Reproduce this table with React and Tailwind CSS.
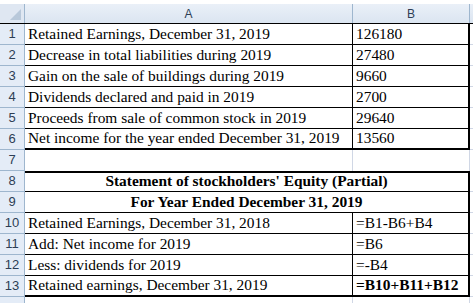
import React from 'react';

const serif = { fontFamily: '"Liberation Serif", "Times New Roman", serif' };

const rows = [
  { n: 1, a: 'Retained Earnings, December 31, 2019', b: '126180' },
  { n: 2, a: 'Decrease in total liabilities during 2019', b: '27480' },
  { n: 3, a: 'Gain on the sale of buildings during 2019', b: '9660' },
  { n: 4, a: 'Dividends declared and paid in 2019', b: '2700' },
  { n: 5, a: 'Proceeds from sale of common stock in 2019', b: '29640' },
  { n: 6, a: 'Net income for the year ended December 31, 2019', b: '13560', last: true },
];

const stmt = [
  { n: 10, a: 'Retained Earnings, December 31, 2018', b: '=B1-B6+B4' },
  { n: 11, a: 'Add: Net income for 2019', b: '=B6' },
  { n: 12, a: 'Less: dividends for 2019', b: '=-B4' },
  { n: 13, a: 'Retained earnings, December 31, 2019', b: '=B10+B11+B12', last: true, bold: true },
];

function RowNum({ n }) {
  return (
    <div className="w-[25px] shrink-0 flex items-center justify-center border-r border-b border-[#9eb6ce] bg-[#e4ecf7] text-[13px] text-[#2d3e55]" style={{ fontFamily: '"Liberation Sans", Arial, sans-serif' }}>
      {n}
    </div>
  );
}

function DataRow({ n, a, b, last, bold }) {
  const bottom = last ? 'border-b-2' : 'border-b';
  return (
    <div className="flex h-[21px]">
      <RowNum n={n} />
      <div className={`w-[328px] shrink-0 flex items-end pl-[3px] pb-[1px] border-r border-black ${bottom} text-[15.4px] leading-[18px] whitespace-nowrap overflow-hidden`} style={serif}>
        {a}
      </div>
      <div className={`w-[117px] shrink-0 flex items-end pl-[3px] pb-[1px] border-r-2 border-black ${bottom} text-[15.4px] leading-[18px] whitespace-nowrap ${bold ? 'font-bold' : ''}`} style={serif}>
        {b}
      </div>
      <div className="flex-1 border-b border-[#d0d7e5]" />
    </div>
  );
}

function TitleRow({ n, text, top }) {
  return (
    <div className="flex h-[21px]">
      <RowNum n={n} />
      <div className={`w-[445px] shrink-0 flex items-end justify-center pb-[1px] border-r-2 border-b border-black ${top ? 'border-t-2' : ''} text-[15.4px] leading-[18px] font-bold whitespace-nowrap`} style={serif}>
        {text}
      </div>
      <div className="flex-1 border-b border-[#d0d7e5]" />
    </div>
  );
}

export default function App() {
  return (
    <div className="w-[473px] h-[303px] overflow-hidden bg-white pt-[4px]">
      <div className="flex h-[20px] border-b border-black" style={{ fontFamily: '"Liberation Sans", Arial, sans-serif' }}>
        <div className="w-[25px] shrink-0 relative bg-[#dfe7f2] border-r border-[#9eb6ce]">
          <div className="absolute right-[3px] bottom-[3px] w-0 h-0 border-l-[11px] border-l-transparent border-b-[11px] border-b-[#b8c8da]" />
        </div>
        <div className="w-[328px] shrink-0 flex items-center justify-center bg-gradient-to-b from-[#eaf0f8] to-[#dbe5f1] border-r border-[#9eb6ce] text-[12px] text-[#2d3e55]">
          A
        </div>
        <div className="w-[117px] shrink-0 flex items-center justify-center bg-gradient-to-b from-[#eaf0f8] to-[#dbe5f1] border-r border-[#9eb6ce] text-[12px] text-[#2d3e55]">
          B
        </div>
        <div className="flex-1 bg-gradient-to-b from-[#eaf0f8] to-[#dbe5f1]" />
      </div>

      {rows.map((r) => (
        <DataRow key={r.n} {...r} />
      ))}

      <div className="flex h-[21px]">
        <RowNum n={7} />
        <div className="w-[328px] shrink-0 border-r border-[#d0d7e5]" />
        <div className="w-[117px] shrink-0 border-r border-[#d0d7e5]" />
        <div className="flex-1" />
      </div>

      <TitleRow n={8} text="Statement of stockholders' Equity (Partial)" top />
      <TitleRow n={9} text="For Year Ended December 31, 2019" />

      {stmt.map((r) => (
        <DataRow key={r.n} {...r} />
      ))}

      <div className="flex h-[21px]">
        <div className="w-[25px] shrink-0 border-r border-[#9eb6ce] bg-[#e4ecf7]" />
        <div className="w-[328px] shrink-0 border-r border-[#d0d7e5]" />
        <div className="w-[117px] shrink-0 border-r border-[#d0d7e5]" />
        <div className="flex-1" />
      </div>
    </div>
  );
}
